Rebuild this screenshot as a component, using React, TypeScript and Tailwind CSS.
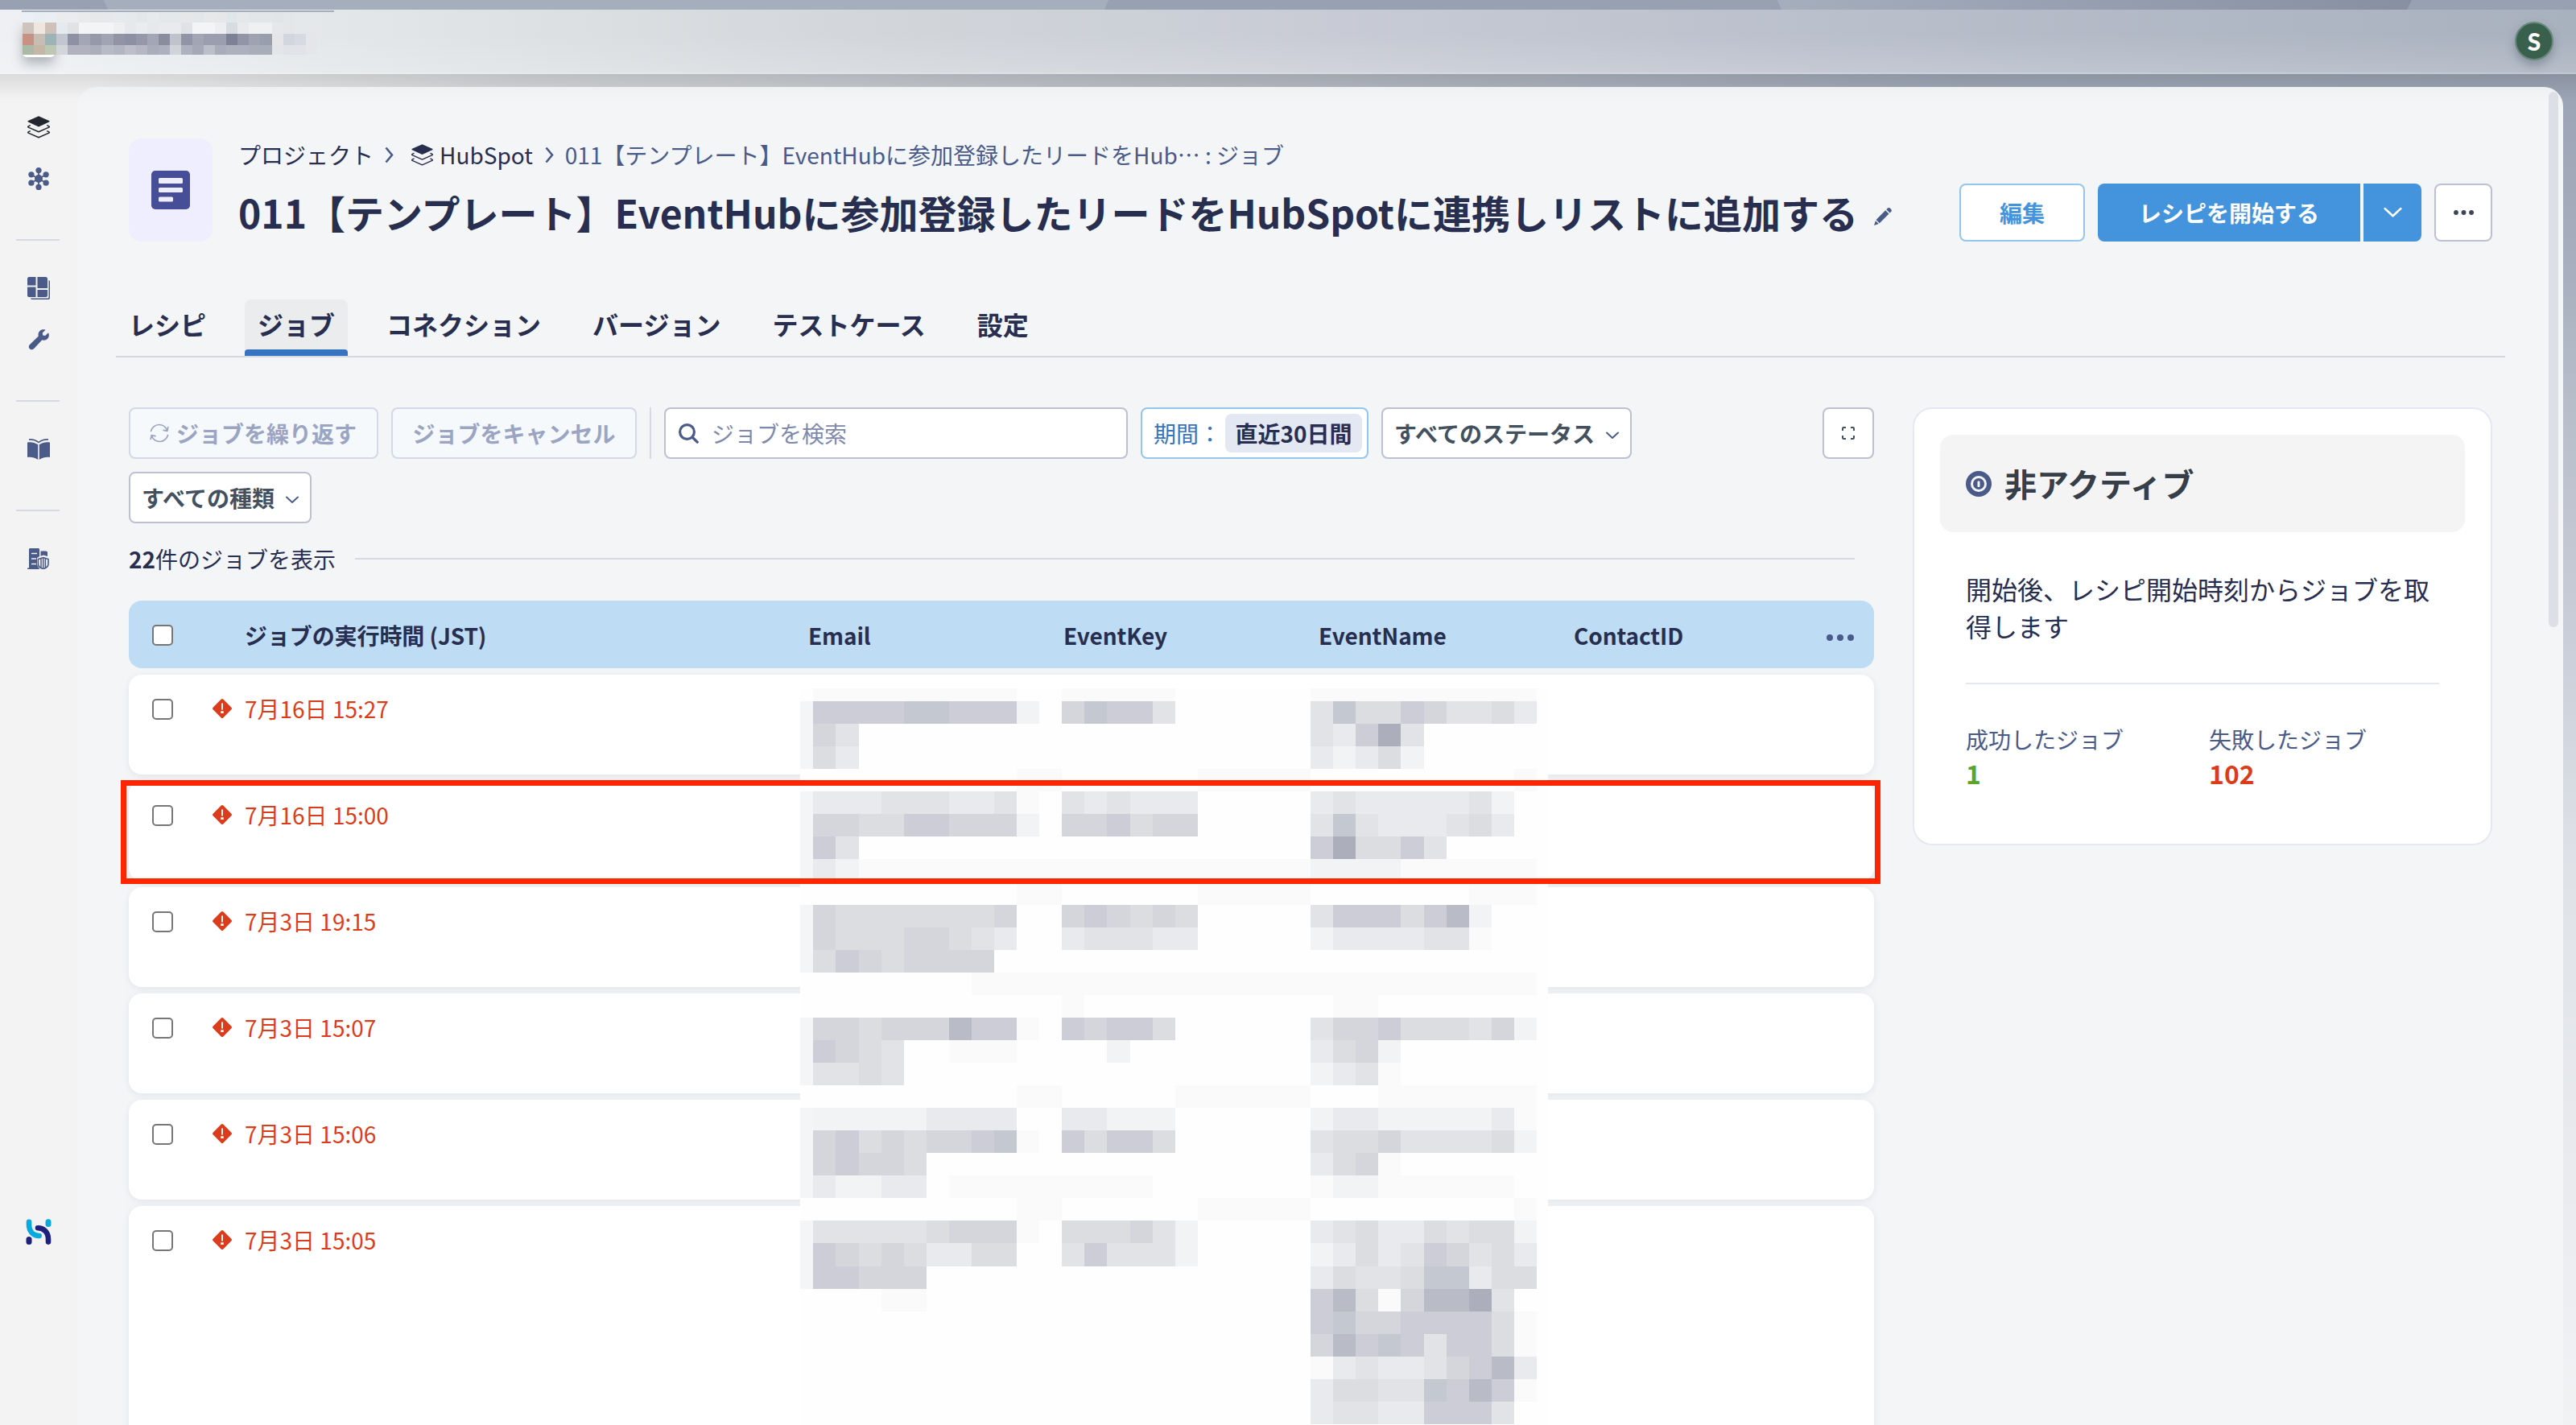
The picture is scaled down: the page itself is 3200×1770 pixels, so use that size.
import type { ReactNode } from 'react';

const CELL = 28.06;

const SHADES: Record<string, string> = {
  a: '#fafafb',
  b: '#f2f3f4',
  c: '#e9eaed',
  d: '#e2e3e7',
  e: '#dcdde1',
  f: '#d5d6db',
  g: '#cccdd6',
  h: '#c4c8d0',
  i: '#b9bbc7',
  j: '#acaebb',
};

// One entry per masked line: [email, eventKey, eventName]
const MASK_ROWS: [string, string, string][] = [
  ['aaaaaaaaa', 'aaaaa', 'aaaaaaaaaa'],
  ['gggghhgggb', 'fhggd', 'dheegfddec'],
  ['fd', '', 'dcgjd'],
  ['ec', '', 'cbceb'],
  ['.........aa', '......aaaaa', '.........a'],
  ['cccdddccda', 'dcdccc', 'cdcccccdb'],
  ['ffeeggfffb', 'ffgeff', 'dhdcccdec'],
  ['gd', '', 'gjeegd'],
  ['cbaaaaaaaaa', 'aaaaaaaaaaa', 'bbbbaaaaaa'],
  ['.........aa', '......aaaaa', '.......aaa'],
  ['feeeeeeef', 'fgfefe', 'dgggegib'],
  ['feeeffedc', 'cdddcc', 'bccccdda'],
  ['egfeffff', '', ''],
  ['.......aaaa', 'aaaaaaaaaaa', 'aaaaaaaaaa'],
  ['', 'a', '.aa'],
  ['ffefffigga', 'gfgge', 'dffgeeedfb'],
  ['gfed..aaa', '..b', 'cefb'],
  ['dded', '', 'bcda'],
  ['.........aa', '.....aaaaaa', '...aaaaaaa'],
  ['bbbbbcccc', 'ccbbb', 'bccbbbbbca'],
  ['fgefeffgha', 'gegge', 'deefddddeb'],
  ['fgffe', '', 'cefa'],
  ['cbbcc.aaaaa', 'aaaa', 'abbaaaaaa'],
  ['.........aa', '......aaaaa', '.........a'],
  ['dddddefffa', 'eeefdb', 'cdeccedeeb'],
  ['gfefeccee', 'dgdddb', 'bcecdgfdec'],
  ['ggfff', '', 'ceddehhcee'],
  ['...aa', '', 'gieafiijd'],
  ['', '', 'ghffggggea'],
  ['', '', 'fighgdggea'],
  ['', '', 'acdccdfgic'],
  ['', '', 'ceeddhgiga'],
  ['', '', 'cddccgggd'],
];

const HEADER_MASK: string[][] = [
  ['#ebf0f6', '#e8eff3', '#e9eff3', '#eaecee', '#e9edef', '#e8eaec', '#e6e8ea', '#e6e8e9', '#e4eaed', '#e5e9ec', '#e4e7ea', '#e6eaec', '#e4e8eb', '#e3e8ea', '#e5e7e9', '#e3e7ea', '#e6e8ea', '#e5e7e9', '#e0e7eb', '#e4e8ea', '#e2e6e9', '#e2e6e8', '#e1e5e8', '#e3e7e9'],
  ['#cfc3bd', '#efe6e0', '#cfc1b9', '#e4eaee', '#e0e2e6', '#f3f4f6', '#f3f4f6', '#f3f4f6', '#edeff1', '#e6e8ec', '#eaedf0', '#e6e8ec', '#e8eaed', '#e8eaed', '#dfe2e6', '#f2f4f6', '#f2f4f6', '#edeef1', '#d8dce1', '#e8eaed', '#eef0f2', '#eef0f2', '#e5e7ea', '#e4e6e9'],
  ['#c79283', '#c8bdb3', '#9db4b6', '#c3c6d0', '#8e90a3', '#a3a6b5', '#9799ab', '#a1a4b3', '#9294a6', '#8d8fa2', '#9698aa', '#a3a6b4', '#8b8d9f', '#bfc3cc', '#9193a6', '#a2a5b3', '#9b9eae', '#9b9eae', '#7d8195', '#9395a7', '#9fa2b1', '#999eae', '#e6e6e9', '#d2d6df', '#d6dae3', '#e5e5ea'],
  ['#abbaa7', '#c4b7a7', '#bec7b4', '#d2d6d8', '#b0b2c0', '#b0b2c0', '#abaebb', '#b8bbc7', '#b2b5c2', '#bcbfca', '#b5b8c4', '#a9acba', '#adb0be', '#d0d3da', '#aeb1bf', '#a5a8b6', '#bbbfc8', '#a9acba', '#adb0bd', '#adb0be', '#a9acb9', '#a9acb9', '#e4e5e9', '#e2e3e8', '#e2e3e8', '#e5e6ea'],
];

const jobs = [
  { time: '7月16日 15:27' },
  { time: '7月16日 15:00' },
  { time: '7月3日 19:15' },
  { time: '7月3日 15:07' },
  { time: '7月3日 15:06' },
  { time: '7月3日 15:05', tall: true },
];

const tabs = ['レシピ', 'ジョブ', 'コネクション', 'バージョン', 'テストケース', '設定'];

function LayersIcon({ className }: { className?: string }) {
  return (
    <svg className={className} viewBox="0 0 28 28" fill="none" stroke="currentColor" strokeWidth="1.5" strokeLinejoin="round" strokeLinecap="round">
      <path d="M14 .3 27 6c.8.400.8 1 0 1.400L14 13.500 1 7.400c-.8-.4-.8-1 0-1.400z" fill="currentColor" stroke="none" />
      <path d="M3.200 11.900 1.200 12.900c-.7.4-.7.9 0 1.200L14 19.800l12.800-5.700c.7-.3.7-.8 0-1.200l-2-1" />
      <path d="M3.200 18.900 1.200 19.900c-.7.4-.7.9 0 1.200L14 26.800l12.800-5.700c.7-.3.7-.8 0-1.200l-2-1" />
    </svg>
  );
}

function HubIcon() {
  return (
    <svg className="h-7 w-7" viewBox="0 0 28 28" fill="currentColor">
      <g stroke="currentColor" strokeWidth="1.800">
        <path d="M14 4v20M5 9l18 10M23 9 5 19" />
      </g>
      <circle cx="14" cy="14" r="5" />
      <circle cx="14" cy="3.600" r="3.600" />
      <circle cx="14" cy="24.400" r="3.600" />
      <circle cx="4.900" cy="8.800" r="3.600" />
      <circle cx="23.100" cy="8.800" r="3.600" />
      <circle cx="4.900" cy="19.200" r="3.600" />
      <circle cx="23.100" cy="19.200" r="3.600" />
    </svg>
  );
}

function DashboardIcon() {
  return (
    <svg className="h-7 w-7" viewBox="0 0 28 28" fill="currentColor">
      <path d="M2 0h8.500v10.500H0V2c0-1 1-2 2-2zM12.500 0H23c1 0 2 1 2 2v12H12.500zM0 12.500h10.500V25H2c-1 0-2-1-2-2zM12.500 16H25v7c0 1-1 2-2 2H12.500z" />
      <path d="M26.500 4c1 .3 1.500 1 1.500 2v20c0 1.200-.8 2-2 2H6c-1 0-1.700-.5-2-1.500h21c1 0 1.500-.5 1.500-1.500z" />
    </svg>
  );
}

function WrenchIcon() {
  return (
    <svg className="h-[26px] w-[26px]" viewBox="0 0 26 26" fill="currentColor">
      <path d="M21.500.8 17.800 4.600l.4 3 3 .5 3.900-3.900c.9 1.800 1.200 4.200-.2 6.500-1.700 2.700-4.900 3.500-7.600 2.600L7.200 23.900c-1.500 1.600-4 1.800-5.400.4-1.500-1.400-1.300-3.900.2-5.400L12.800 8.600c-.7-2.300-.1-4.700 1.500-6.400C16.300.2 19 0 21.500.8z" />
    </svg>
  );
}

function BookIcon() {
  return (
    <svg className="h-[26px] w-7" viewBox="0 0 28 26" fill="currentColor">
      <path d="M0 4.500c4.500-.9 9 0 13.200 2.800V26C9 23.300 4.500 22.300 0 23zM28 4.500c-4.500-.9-9 0-13.200 2.800V26c4.200-2.700 8.700-3.700 13.200-3z" />
      <path d="M2 .9c4.500-.3 8.600.8 12 3.600C17.400 1.700 21.500.6 26 .9" fill="none" stroke="currentColor" strokeWidth="1.600" />
    </svg>
  );
}

function CompanyIcon() {
  return (
    <svg className="h-[26px] w-7" viewBox="0 0 28 26" fill="currentColor">
      <path d="M2 1.500C2 .6 2.600 0 3.500 0h10c.9 0 1.500.6 1.500 1.500V10l-3 2v7.500c.3 2 1.200 3.800 2.800 5.500V26H0v-1.500h2z" />
      <path d="M16.500 3.500H23c1 0 2 .8 2 1.800V10l-5-1.500-3.500 1.300z" />
      <path d="M5 6.500h7M5 13h6M5 19.500h6" stroke="#f3f3f3" strokeWidth="1.500" />
      <path d="M19.700 11.500 26 13.600v6c0 2.900-2.700 5-6.300 6.200-3.600-1.200-6.300-3.300-6.300-6.200v-6z" fill="#f3f3f3" stroke="currentColor" strokeWidth="1.600" />
      <path d="M17 13v11.500M19.700 12v13.500M22.400 13v11.500" stroke="currentColor" strokeWidth="1.500" />
    </svg>
  );
}

function BrandIcon() {
  return (
    <svg className="h-8 w-8" viewBox="0 0 32 32" fill="none" strokeWidth="7" strokeLinecap="round">
      <path d="M4 3.800v3.400c0 8 5 13.800 12.600 13.800" stroke="#06a9e0" strokeWidth="6.600" />
      <path d="M28 3.800v2.800" stroke="#06a9e0" />
      <path d="M15 11.200C22 11 28 16.500 28 25v3.600" stroke="#1e217c" strokeWidth="6.600" />
      <path d="M4 25.600v2.800" stroke="#1e217c" />
    </svg>
  );
}

function ChevronDown({ className }: { className?: string }) {
  return (
    <svg className={className} viewBox="0 0 16 10" fill="none" stroke="currentColor" strokeWidth="1.900" strokeLinecap="round" strokeLinejoin="round">
      <path d="M1 1.500 8 8l7-6.500" />
    </svg>
  );
}

function ChevronRight() {
  return (
    <svg className="h-[21px] w-[11px] text-[#4a5a89]" viewBox="0 0 11 21" fill="none" stroke="currentColor" strokeWidth="2.600">
      <path d="m1.500 1.500 7.500 9-7.500 9" />
    </svg>
  );
}

function Dots({ className }: { className?: string }) {
  return (
    <svg className={className} viewBox="0 0 34 8" fill="currentColor">
      <circle cx="4" cy="4" r="4" />
      <circle cx="17" cy="4" r="4" />
      <circle cx="30" cy="4" r="4" />
    </svg>
  );
}

function Checkbox() {
  return <span className="block h-[26px] w-[26px] shrink-0 rounded-[5px] border-2 border-[#767676] bg-white" />;
}

function AlertDiamond() {
  return (
    <svg className="h-6 w-6 shrink-0" viewBox="0 0 24 24">
      <path d="M10.700.6a2 2 0 0 1 2.600 0l10.100 10.100a2 2 0 0 1 0 2.600L13.300 23.400a2 2 0 0 1-2.600 0L.6 13.300a2 2 0 0 1 0-2.600z" fill="#db3c1c" />
      <path d="M12 5.500v8" stroke="#fff" strokeWidth="2" />
      <path d="M10.300 15.300h3.400v2.700h-3.400z" fill="#fff" />
    </svg>
  );
}

function Button({ className = '', children }: { className?: string; children: ReactNode }) {
  return (
    <div className={`flex h-16 shrink-0 items-center rounded-lg border-2 text-[28px] leading-none whitespace-nowrap ${className}`}>
      {children}
    </div>
  );
}

// Censored cell values, drawn over the three text columns
function MaskOverlay() {
  const starts = [0, 11, 22];
  return (
    <svg className="absolute top-[109px] left-[834px] h-[915px] w-[929px]" viewBox="0 0 929 915" shapeRendering="crispEdges">
      <rect width="929" height="915" fill="#fefefe" />
      {MASK_ROWS.map((row, r) => {
        const y = r === 0 ? 0 : 16 + (r - 1) * CELL;
        const h = r === 0 ? 16 : CELL;
        return (
          <g key={r}>
            {row[0].length > 1 && row[0][0] !== '.' && r > 0 && (
              <rect x="0" y={y} width="16.400" height={h} fill="#f4f5f7" />
            )}
            {row.map((line, c) =>
              line.split('').map((s, i) =>
                s === '.' ? null : (
                  <rect key={`${c}-${i}`} x={16.4 + (starts[c] + i) * 28.08} y={y} width={28.08} height={h} fill={SHADES[s]} />
                )
              )
            )}
          </g>
        );
      })}
    </svg>
  );
}

function TopBar() {
  return (
    <>
      {/* Browser tab strip */}
      <svg className="block h-3 w-full shrink-0" viewBox="0 0 3200 12">
        <defs>
          <linearGradient id="strip" x1="0" x2="1">
            <stop offset="0" stopColor="#a5aebd" />
            <stop offset="1" stopColor="#8690a1" />
          </linearGradient>
        </defs>
        <rect width="3200" height="12" fill="#98a1b2" />
        <path d="M129 0h1248l-5 12H134z" fill="#a5aebd" />
        <path d="M2208 0h788l-6 12h-777z" fill="url(#strip)" />
      </svg>
      <header className="relative flex h-20 shrink-0 items-start justify-between border-b-2 border-white/30 bg-[linear-gradient(180deg,rgba(255,255,255,0)_40%,rgba(255,255,255,0.16)_100%),linear-gradient(90deg,#eef0f3_0%,#e3e7e9_13%,#d2d6da_34%,#c8cbd5_52%,#bac0cc_70%,#a8b1be_100%)] pr-7 pl-[27px]">
        <div className="relative">
          <div className="absolute top-[16px] left-px h-[43px] w-10 rounded-[5px] bg-white shadow-[0_8px_14px_rgba(60,70,80,0.35)]" />
          <svg className="relative block h-14 w-[390px]" viewBox="0 0 390 56" shapeRendering="crispEdges">
            <rect y="1" width="388" height="1.500" fill="#a6adbc" />
            {HEADER_MASK.map((row, r) => {
              const tops = [3, 16, 30, 44];
              const heights = [13, 14, 14, 12];
              return row.map((color, c) => (
                <rect key={`${r}-${c}`} x={1 + c * 14.07} y={tops[r]} width="14.070" height={heights[r]} fill={color} />
              ));
            })}
          </svg>
        </div>
        <div className="mt-[15px] flex h-12 w-12 items-center justify-center rounded-full border-2 border-[#66897a] bg-[#38604c] font-['Lato'] text-[30px] leading-none font-black text-white shadow-[0_6px_12px_rgba(60,70,90,0.35)]">
          S
        </div>
      </header>
    </>
  );
}

function Sidebar() {
  const line = 'h-0.5 w-[54px] -translate-x-px bg-[#d6dae4]';
  return (
    <nav className="flex w-24 shrink-0 flex-col items-center text-[#4a5a89]">
      <LayersIcon className="mt-[52px] h-7 w-7 text-[#24272f]" />
      <div className="mt-9"><HubIcon /></div>
      <div className={`mt-[61px] ${line}`} />
      <div className="mt-[45px]"><DashboardIcon /></div>
      <div className="mt-[37px]"><WrenchIcon /></div>
      <div className={`mt-[62px] ${line}`} />
      <div className="mt-[46px]"><BookIcon /></div>
      <div className={`mt-[62px] ${line}`} />
      <div className="mt-[46px]"><CompanyIcon /></div>
      <div className="mt-[807px]"><BrandIcon /></div>
    </nav>
  );
}

function PageHeader() {
  return (
    <div className="flex h-32 items-center">
      <div className="flex h-32 w-[104px] shrink-0 items-center justify-center rounded-2xl bg-[#efeefe]">
        <svg className="h-12 w-12" viewBox="0 0 48 48">
          <rect width="48" height="48" rx="5" fill="#464e97" />
          <g fill="#efeefe">
            <rect x="9" y="9" width="30" height="7" rx="1.500" />
            <rect x="9" y="21" width="30" height="6" rx="1.500" />
            <rect x="9" y="32.500" width="18" height="6" rx="1.500" />
          </g>
        </svg>
      </div>
      <div className="ml-8 flex h-32 flex-col whitespace-nowrap text-[#272e50]">
        <div className="flex h-10 items-center text-[28px] leading-none">
          <span>プロジェクト</span>
          <span className="ml-[14px]"><ChevronRight /></span>
          <LayersIcon className="ml-[22px] h-[27px] w-[27px]" />
          <span className="ml-2">HubSpot</span>
          <span className="ml-[15px]"><ChevronRight /></span>
          <span className="ml-[14px] text-[#4a5a89]">011【テンプレート】EventHubに参加登録したリードをHub<span lang="ja">…</span> : ジョブ</span>
        </div>
        <div className="mt-4 flex h-[70px] items-center">
          <h1 className="text-[48px] leading-none font-bold">011【テンプレート】EventHubに参加登録したリードをHubSpotに連携しリストに追加する</h1>
          <svg className="mt-3 ml-5 h-[22px] w-[22px] shrink-0 text-[#4a5a89]" viewBox="0 0 22 22" fill="currentColor">
            <path d="M15.300 2.200 17 .6c1-.9 2.200-.7 3 .1l1.200 1.200c.9.900.9 2.100 0 3l-1.600 1.700zM14.200 3.300l4.300 4.300L6.800 19.200l-4.200-4.300zM1.900 16.200l3.800 3.800L0 22z" />
          </svg>
        </div>
      </div>
      <div className="ml-auto flex h-[72px] gap-4 self-end text-[28px] leading-none font-bold">
        <div className="flex w-[156px] items-center justify-center rounded-lg border-2 border-[#93c6ec] bg-white text-[#4493dd]">編集</div>
        <div className="flex gap-1 text-white">
          <div className="flex w-[326px] items-center justify-center rounded-l-lg bg-[#4493dd]">レシピを開始する</div>
          <div className="flex w-[72px] items-center justify-center rounded-r-lg bg-[#4493dd]">
            <ChevronDown className="h-[14px] w-[25px]" />
          </div>
        </div>
        <div className="flex w-[72px] items-center justify-center rounded-lg border-2 border-[#bcc0d0] bg-white text-[#3e4756]">
          <Dots className="h-[6px] w-[25px]" />
        </div>
      </div>
    </div>
  );
}

function Tabs() {
  return (
    <div className="-mx-4 mt-[72px] flex gap-8 border-b-2 border-[#d3d9e4]">
      {tabs.map((tab, i) => (
        <div
          key={tab}
          className={
            i === 1
              ? 'flex h-[70px] flex-col justify-between rounded-t-lg bg-[#ebecee] text-[32px] leading-none font-bold text-[#272e50]'
              : 'flex h-[70px] flex-col text-[32px] leading-none font-bold text-[#272e50]'
          }
        >
          <span className="px-4 pt-3.5">{tab}</span>
          {i === 1 && <span className="h-2 rounded-t-[4px] bg-[#3673c0]" />}
        </div>
      ))}
    </div>
  );
}

function Toolbar() {
  return (
    <div className="flex justify-between">
      <div className="flex w-[1900px] flex-wrap gap-4">
        <Button className="w-[310px] border-[#d3d9e6] bg-[#f5f9fc] pl-6 font-bold text-[#9ba5c3]">
          <svg className="mr-[9px] h-6 w-6" viewBox="0 0 24 24" fill="none" stroke="currentColor" strokeWidth="1.700" strokeLinecap="round" strokeLinejoin="round">
            <path d="M1.500 9.500C2.600 5 6.700 1.500 11.500 1.500c4.600 0 8.500 3 10 7M22.800 4.500l-1 4.800-4.700-1M22.500 14.500c-1.100 4.500-5.200 8-10 8-4.600 0-8.500-3-10-7M1.200 19.500l1-4.800 4.700 1" />
          </svg>
          ジョブを繰り返す
        </Button>
        <Button className="w-[305px] justify-center border-[#d3d9e6] bg-[#f5f9fc] font-bold text-[#9ba5c3]">ジョブをキャンセル</Button>
        <div className="h-16 w-0.5 bg-[#d3d9e6]" />
        <Button className="w-[576px] border-[#bcc0d0] bg-white pl-4 text-[#7e89ae]">
          <svg className="mr-4 h-[25px] w-[25px] text-[#4a5a89]" viewBox="0 0 25 25" fill="none" stroke="currentColor" strokeWidth="3.200" strokeLinecap="round">
            <circle cx="10.500" cy="10.500" r="8.900" />
            <path d="m17.500 17.500 5.700 5.700" />
          </svg>
          ジョブを検索
        </Button>
        <Button className="w-[283px] justify-between border-[#93c6ec] bg-white pr-1.5 pl-[14px] text-[#3673c0]">
          <span className="w-[82px]">期間：</span>
          <span className="flex h-12 w-[170px] items-center justify-center rounded-lg bg-[#e4e8f2] font-bold text-[#272e50]">直近30日間</span>
        </Button>
        <Button className="w-[311px] justify-between border-[#bcc0d0] bg-white pr-3.5 pl-[14px] font-bold text-[#42505f]">
          すべてのステータス
          <ChevronDown className="mt-1.5 h-2.5 w-4 text-[#4a5a89]" />
        </Button>
        <Button className="w-[227px] justify-between border-[#bcc0d0] bg-white pr-3.5 pl-[14px] font-bold text-[#42505f]">
          すべての種類
          <ChevronDown className="mt-1.5 h-2.5 w-4 text-[#4a5a89]" />
        </Button>
      </div>
      <Button className="w-16 justify-center border-[#bcc0d0] bg-white text-[#42505f]">
        <svg className="h-4 w-4" viewBox="0 0 16 16" fill="none" stroke="currentColor" strokeWidth="2">
          <path d="M1 5V2.200C1 1.500 1.500 1 2.200 1H5M11 1h2.800c.7 0 1.200.5 1.200 1.200V5M15 11v2.800c0 .7-.5 1.200-1.200 1.200H11M5 15H2.200C1.500 15 1 14.500 1 13.800V11" />
        </svg>
      </Button>
    </div>
  );
}

function JobTable() {
  return (
    <div className="relative mt-8">
      <div className="flex h-[84px] items-center rounded-2xl bg-[#bedcf4] pt-px pr-[25px] pl-[29px] text-[28px] leading-none font-bold tracking-[-0.1px] text-[#272e50]">
        <Checkbox />
        <div className="ml-[89px] grid grow grid-cols-[700px_317px_317px_317px_1fr] items-center">
          <span>ジョブの実行時間 (JST)</span>
          <span>Email</span>
          <span>EventKey</span>
          <span>EventName</span>
          <span>ContactID</span>
        </div>
        <Dots className="mt-1.5 h-2 w-[34px] text-[#4a5a89]" />
      </div>
      <div className="mt-2 flex flex-col gap-2">
        {jobs.map((job) => (
          <div
            key={job.time}
            className={
              job.tall
                ? 'flex h-[300px] items-start rounded-2xl bg-white pt-[30px] pl-[29px] shadow-[0_2px_8px_rgba(90,100,120,0.1)]'
                : 'flex h-[124px] items-start rounded-2xl bg-white pt-[30px] pl-[29px] shadow-[0_2px_8px_rgba(90,100,120,0.1)]'
            }
          >
            <Checkbox />
            <span className="ml-[49px]"><AlertDiamond /></span>
            <span className="ml-4 text-[28px] leading-6 text-[#db3c1c]">{job.time}</span>
          </div>
        ))}
      </div>
      <MaskOverlay />
      {/* Highlighted job */}
      <div className="absolute top-[223px] -left-[10px] h-[129px] w-[2186px] border-[7px] border-[#fe2600]" />
    </div>
  );
}

function StatusCard() {
  return (
    <aside className="h-[544px] w-[720px] shrink-0 rounded-3xl border-2 border-[#e4e8f2] bg-white p-8">
      <div className="flex h-[121px] items-center rounded-2xl bg-[#f4f4f5] pl-8">
        <svg className="h-8 w-8" viewBox="0 0 32 32">
          <circle cx="16" cy="16" r="16" fill="#4a5a89" />
          <circle cx="16" cy="16" r="8.500" fill="none" stroke="#f4f4f5" strokeWidth="3" />
          <rect x="14.500" y="12.500" width="3" height="7.500" rx="1" fill="#f4f4f5" />
        </svg>
        <span className="mb-0.5 ml-4 text-[40px] leading-none font-bold text-[#363e4a]">非アクティブ</span>
      </div>
      <div className="mx-8 mt-[47px] border-b-2 border-[#e4e8f2] pb-12 text-[32px] leading-[46px] text-[#272e50]">
        開始後、レシピ開始時刻からジョブを取得します
      </div>
      <div className="mx-8 mt-12 grid grid-cols-[302px_1fr]">
        <div>
          <div className="text-[28px] leading-10 text-[#4a5a89]">成功したジョブ</div>
          <div className="text-[32px] leading-11 font-bold text-[#5ca427]">1</div>
        </div>
        <div>
          <div className="text-[28px] leading-10 text-[#4a5a89]">失敗したジョブ</div>
          <div className="text-[32px] leading-11 font-bold text-[#db3c1c]">102</div>
        </div>
      </div>
    </aside>
  );
}

export default function App() {
  return (
    <div className="flex h-[1770px] w-[3200px] flex-col overflow-hidden bg-[#f3f3f3] font-['Noto_Sans_CJK_JP',sans-serif]">
      <TopBar />
      <div className="relative flex min-h-0 grow bg-[linear-gradient(180deg,#9aa3b3_0%,#a8b0bf_15%,#b5bcc8_23%,#c9cdd8_41%,#dfe2e7_59%,#f1f2f4_100%)]">
        <div className="absolute inset-0 bg-[linear-gradient(90deg,#f3f3f3_0%,#f3f3f3_3%,#d4d6d9_20%,rgba(190,194,201,0.9)_45%,rgba(165,173,186,0.4)_75%,transparent_98%)]" />
        <div className="absolute inset-x-0 top-0 h-8 bg-linear-to-b from-black/10 to-transparent" />
        <div className="relative flex grow">
          <Sidebar />
          <main className="relative mt-4 mr-4 flex h-[1700px] grow flex-col rounded-3xl bg-[linear-gradient(180deg,#eff0f2_0px,#f3f5f7_20px)] px-16 pt-16 pr-[88px]">
            <PageHeader />
            <Tabs />
            <div className="mt-[62px] flex justify-between">
              <section className="w-[2168px]">
                <Toolbar />
                <div className="mt-6 flex h-10 items-center text-[28px] leading-none text-[#272e50]">
                  <span><span className="font-bold">22</span>件のジョブを表示</span>
                  <div className="mr-6 ml-6 h-0.5 grow bg-[#d3d9e4]" />
                </div>
                <JobTable />
              </section>
              <StatusCard />
            </div>
            <div className="absolute top-1.5 right-1.5 h-[665px] w-3 rounded-full bg-[#dddfe6]" />
          </main>
        </div>
      </div>
    </div>
  );
}
